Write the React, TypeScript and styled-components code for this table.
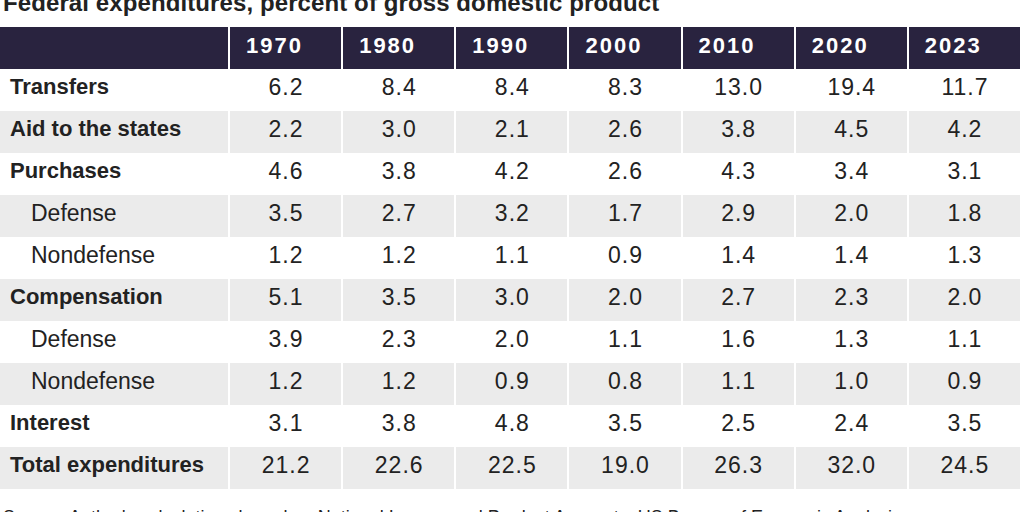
import React from 'react';
import styled, { createGlobalStyle } from 'styled-components';

const GlobalStyle = createGlobalStyle`
  html, body {
    margin: 0;
    padding: 0;
    background: #ffffff;
    overflow: hidden;
  }
  body {
    font-family: "Liberation Sans", Arial, sans-serif;
    color: #222222;
  }
`;

const Page = styled.div`
  width: 1024px;
  height: 512px;
  overflow: hidden;
`;

const Title = styled.h1`
  margin: -8px 0 13px 3px;
  height: 22px;
  font-size: 24px;
  line-height: 22px;
  letter-spacing: 0.1px;
  font-weight: 700;
  color: #222222;
  white-space: nowrap;
`;

const Table = styled.div`
  width: 1020px;
  display: flex;
  flex-direction: column;
`;

const Row = styled.div`
  display: grid;
  grid-template-columns: 228px repeat(7, 1fr);
  column-gap: 2px;
  height: 42px;
`;

const HeadCell = styled.div`
  background: #29233f;
  color: #ffffff;
  font-weight: 700;
  font-size: 22px;
  line-height: 37px;
  letter-spacing: 2px;
  padding-left: 16px;
`;

const LabelCell = styled.div<{ $shaded: boolean; $sub: boolean }>`
  background: ${(p) => (p.$shaded ? '#ebebeb' : '#ffffff')};
  padding-left: ${(p) => (p.$sub ? '31px' : '10px')};
  font-size: ${(p) => (p.$sub ? '23px' : '22px')};
  font-weight: ${(p) => (p.$sub ? 400 : 700)};
  line-height: 36px;
  white-space: nowrap;
`;

const ValueCell = styled.div<{ $shaded: boolean }>`
  background: ${(p) => (p.$shaded ? '#ebebeb' : '#ffffff')};
  text-align: center;
  font-size: 23px;
  line-height: 36px;
  letter-spacing: 1px;
  padding-left: 1px;
`;

const Source = styled.p`
  margin: 19px 0 0 3px;
  font-size: 18px;
  line-height: 18px;
  white-space: nowrap;
`;

const years = ['1970', '1980', '1990', '2000', '2010', '2020', '2023'];

const rows: { label: string; sub?: boolean; values: string[] }[] = [
  { label: 'Transfers', values: ['6.2', '8.4', '8.4', '8.3', '13.0', '19.4', '11.7'] },
  { label: 'Aid to the states', values: ['2.2', '3.0', '2.1', '2.6', '3.8', '4.5', '4.2'] },
  { label: 'Purchases', values: ['4.6', '3.8', '4.2', '2.6', '4.3', '3.4', '3.1'] },
  { label: 'Defense', sub: true, values: ['3.5', '2.7', '3.2', '1.7', '2.9', '2.0', '1.8'] },
  { label: 'Nondefense', sub: true, values: ['1.2', '1.2', '1.1', '0.9', '1.4', '1.4', '1.3'] },
  { label: 'Compensation', values: ['5.1', '3.5', '3.0', '2.0', '2.7', '2.3', '2.0'] },
  { label: 'Defense', sub: true, values: ['3.9', '2.3', '2.0', '1.1', '1.6', '1.3', '1.1'] },
  { label: 'Nondefense', sub: true, values: ['1.2', '1.2', '0.9', '0.8', '1.1', '1.0', '0.9'] },
  { label: 'Interest', values: ['3.1', '3.8', '4.8', '3.5', '2.5', '2.4', '3.5'] },
  { label: 'Total expenditures', values: ['21.2', '22.6', '22.5', '19.0', '26.3', '32.0', '24.5'] },
];

export default function App() {
  return (
    <Page>
      <GlobalStyle />
      <Title>Federal expenditures, percent of gross domestic product</Title>
      <Table>
        <Row>
          <HeadCell />
          {years.map((y) => (
            <HeadCell key={y}>{y}</HeadCell>
          ))}
        </Row>
        {rows.map((r, i) => {
          const shaded = i % 2 === 1;
          return (
            <Row key={i}>
              <LabelCell $shaded={shaded} $sub={!!r.sub}>
                {r.label}
              </LabelCell>
              {r.values.map((v, j) => (
                <ValueCell key={j} $shaded={shaded}>
                  {v}
                </ValueCell>
              ))}
            </Row>
          );
        })}
      </Table>
      <Source>
        Source: Author's calculations based on National Income and Product Accounts, US Bureau of
        Economic Analysis.
      </Source>
    </Page>
  );
}
